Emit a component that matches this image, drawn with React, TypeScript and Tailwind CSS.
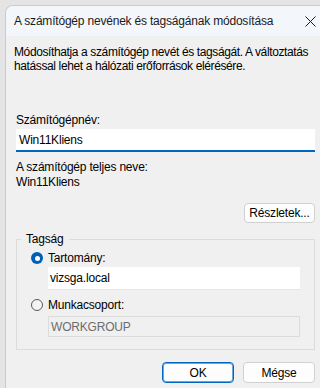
export default function App() {
  return (
    <div className="w-[320px] h-[388px] overflow-hidden bg-[#e4e4e4] pl-[5px] pt-[5px] font-['Liberation_Sans',sans-serif] text-[12px] tracking-[-0.2px] text-black">
      <div className="h-[400px] w-[330px] rounded-tl-[8px] border-l border-t border-[#cbcbcb] bg-[#f0f0f0] overflow-hidden flex flex-col">
        {/* Title bar */}
        <div className="h-[30px] shrink-0 bg-[#f3f6fb] flex items-center pl-[8px]">
          <span className="text-[#1b1b1b] leading-[14px] whitespace-nowrap">A számítógép nevének és tagságának módosítása</span>
          <svg className="ml-auto mr-[19px]" width="11" height="11" viewBox="0 0 11 11" fill="none" stroke="#1b1b1b" strokeWidth="1">
            <path d="M0.5 0.5 L10.5 10.5 M10.5 0.5 L0.5 10.5" />
          </svg>
        </div>

        {/* Content */}
        <div className="w-[314px] pl-[10px] pr-[5px] flex flex-col">
          <p className="-ml-[2px] mt-[9px] leading-[14px] tracking-[-0.38px] whitespace-nowrap">
            Módosíthatja a számítógép nevét és tagságát. A változtatás
            <br />
            hatással lehet a hálózati erőforrások elérésére.
          </p>

          <label className="mt-[40px] leading-[14px]">Számítógépnév:</label>
          <div className="mt-[2px] h-[23px] bg-white border-b-2 border-[#0067c0] flex items-center pl-[3px] pt-[1px]">
            Win11Kliens
          </div>

          <div className="mt-[8px] leading-[14px]">A számítógép teljes neve:</div>
          <div className="mt-[1px] leading-[14px]">Win11Kliens</div>

          <div className="mt-[14px] flex justify-end">
            <button className="w-[71px] h-[20px] rounded-[4px] border border-[#d0d0d0] bg-[#fdfdfd] leading-[14px]">
              Részletek...
            </button>
          </div>

          {/* Group box */}
          <div className="relative mt-[16px] h-[111px] border border-[#dcdcdc] pl-[14px] pr-[14px] pt-[11px]">
            <span className="absolute left-[4px] -top-[8px] px-[5px] bg-[#f0f0f0] leading-[14px]">Tagság</span>
            <div className="flex items-center gap-[5px] h-[14px]">
              <span className="w-[12px] h-[12px] rounded-full bg-[#005fb8] flex items-center justify-center">
                <span className="w-[5px] h-[5px] rounded-full bg-white" />
              </span>
              <span className="leading-[14px]">Tartomány:</span>
            </div>
            <div className="ml-[17px] mt-[2px] h-[23px] bg-white border-b border-[#e6e6e6] flex items-center pl-[2px]">
              vizsga.local
            </div>

            <div className="flex items-center gap-[5px] h-[14px] mt-[8px]">
              <span className="w-[12px] h-[12px] rounded-full border border-[#5a5a5a] bg-[#f4f4f4]" />
              <span className="leading-[14px]">Munkacsoport:</span>
            </div>
            <div className="ml-[17px] mt-[4px] h-[21px] border border-[#dcdcdc] bg-[#f0f0f0] text-[#6d6d6d] flex items-center pl-[2px]">
              WORKGROUP
            </div>
          </div>

          <div className="mt-[12px] flex justify-end gap-[9px]">
            <button className="w-[72px] h-[21px] rounded-[4px] border border-[#0067c0] shadow-[inset_0_0_0_1px_#6aa6dc] bg-[#fdfdfd] leading-[14px]">
              OK
            </button>
            <button className="w-[72px] h-[21px] rounded-[4px] border border-[#d0d0d0] bg-[#fdfdfd] leading-[14px]">
              Mégse
            </button>
          </div>
        </div>
      </div>
    </div>
  );
}
